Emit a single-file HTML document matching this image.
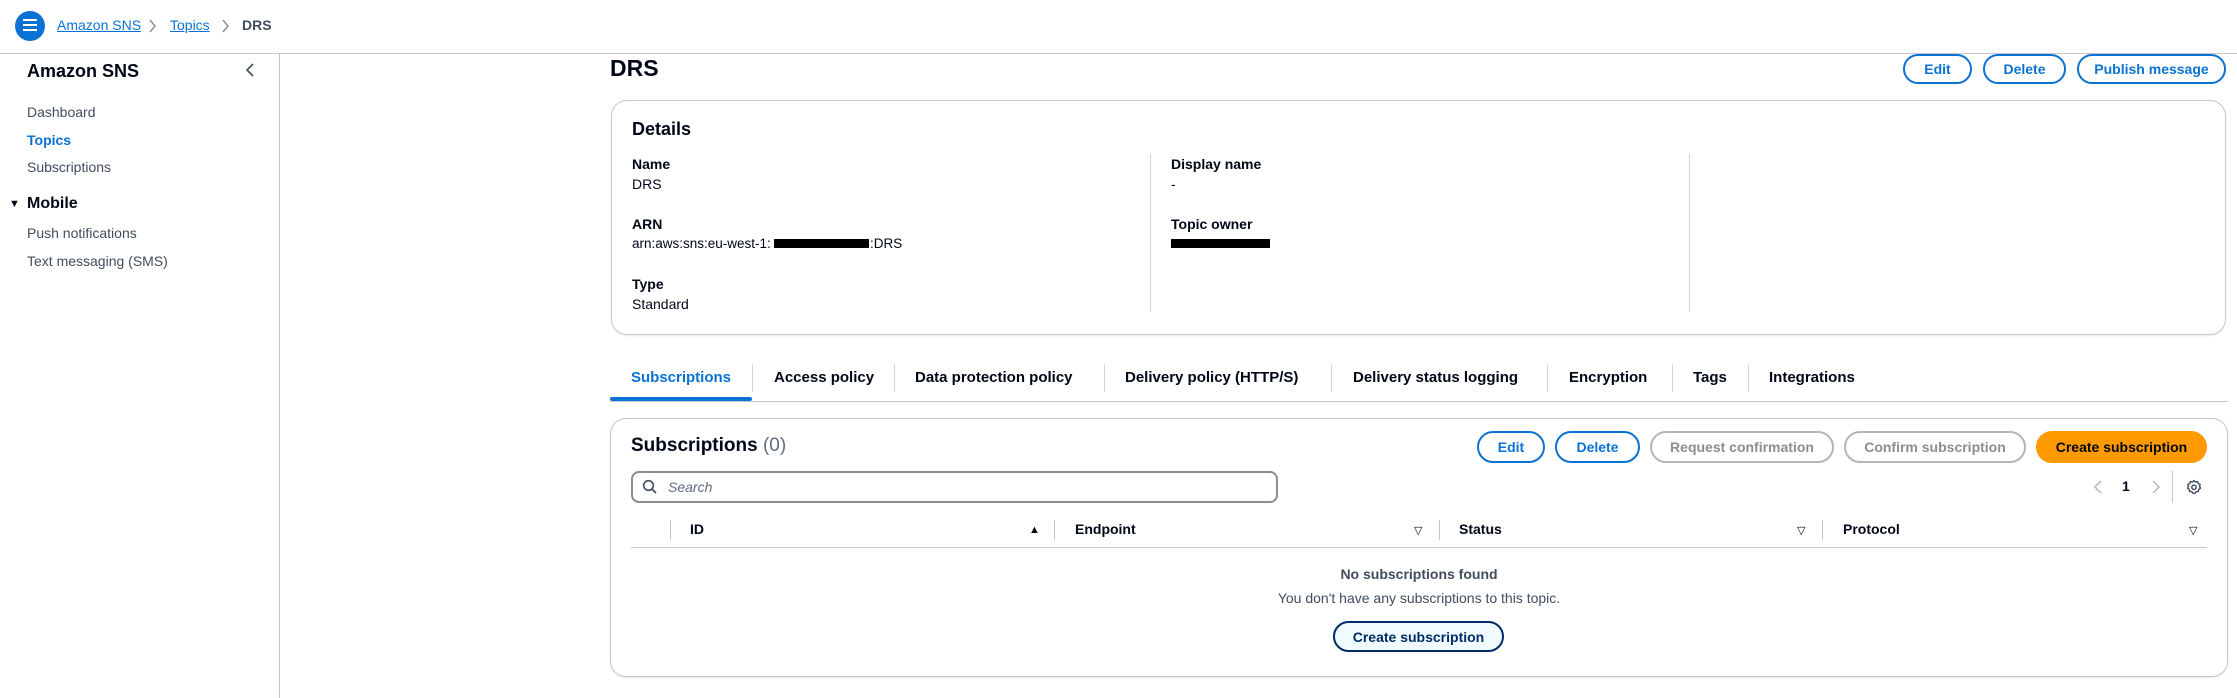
<!DOCTYPE html>
<html><head><meta charset="utf-8"><style>
*{box-sizing:border-box;margin:0;padding:0}
body{width:2237px;height:698px;position:relative;background:#fff;font-family:"Liberation Sans",sans-serif;color:#000716;font-size:14px;overflow:hidden}
.a{position:absolute;white-space:nowrap}
.b{font-weight:bold}
.btn{position:absolute;border:2px solid #0972d3;border-radius:20px;color:#0972d3;font-weight:bold;font-size:14px;display:flex;align-items:center;justify-content:center;background:#fff}
.dis{border-color:#b4b4bb;color:#8c8c94}
.tab{position:absolute;top:369px;font-weight:bold;font-size:15px;color:#000716}
.ts{position:absolute;top:364px;width:1px;height:28px;background:#d1d5db}
.hs{position:absolute;top:520px;width:1px;height:20px;background:#c6c6cd}
.hd{position:absolute;top:521px;font-weight:bold;font-size:14px}
.tri{position:absolute;top:524px;font-size:11px}
</style></head><body>
<!-- header -->
<div class="a" style="left:15px;top:11px;width:30px;height:30px;border-radius:50%;background:#0972d3"></div>
<div class="a" style="left:23px;top:19px;width:14px;height:2px;background:#fff;box-shadow:0 5px 0 #fff,0 10px 0 #fff"></div>
<div class="a" style="left:57px;top:17px;font-size:14px;color:#0972d3;text-decoration:underline">Amazon SNS</div>
<svg class="a" style="left:147px;top:18px" width="10" height="16"><path d="M3 2 L8 8 L3 14" fill="none" stroke="#8c8c94" stroke-width="1.5"/></svg>
<div class="a" style="left:170px;top:17px;font-size:14px;color:#0972d3;text-decoration:underline">Topics</div>
<svg class="a" style="left:220px;top:18px" width="10" height="16"><path d="M3 2 L8 8 L3 14" fill="none" stroke="#8c8c94" stroke-width="1.5"/></svg>
<div class="a b" style="left:242px;top:17px;font-size:14px;color:#414d5c">DRS</div>
<div class="a" style="left:0;top:53px;width:2237px;height:1px;background:#c6c6cd"></div>
<!-- sidebar -->
<div class="a" style="left:279px;top:54px;width:1px;height:644px;background:#c6c6cd"></div>
<div class="a b" style="left:27px;top:61px;font-size:18px">Amazon SNS</div>
<svg class="a" style="left:243px;top:62px" width="14" height="16"><path d="M10 2 L4 8 L10 14" fill="none" stroke="#414d5c" stroke-width="1.6"/></svg>
<div class="a" style="left:27px;top:104px;color:#414d5c">Dashboard</div>
<div class="a b" style="left:27px;top:132px;color:#0972d3">Topics</div>
<div class="a" style="left:27px;top:159px;color:#414d5c">Subscriptions</div>
<div class="a" style="left:9px;top:198px;font-size:11px">&#9660;</div>
<div class="a b" style="left:27px;top:195px;font-size:16px">Mobile</div>
<div class="a" style="left:27px;top:225px;color:#414d5c">Push notifications</div>
<div class="a" style="left:27px;top:253px;color:#414d5c">Text messaging (SMS)</div>
<!-- title -->
<div class="a b" style="left:610px;top:55px;font-size:23px">DRS</div>
<div class="btn" style="left:1903px;top:54px;width:69px;height:30px">Edit</div>
<div class="btn" style="left:1983px;top:54px;width:83px;height:30px">Delete</div>
<div class="btn" style="left:2077px;top:54px;width:149px;height:30px">Publish message</div>
<!-- details -->
<div class="a" style="left:611px;top:100px;width:1615px;height:235px;border:1px solid #c6c6cd;border-radius:16px;box-shadow:0 1px 2px rgba(0,0,0,.08)"></div>
<div class="a b" style="left:632px;top:119px;font-size:18px">Details</div>
<div class="a" style="left:1150px;top:154px;width:1px;height:158px;background:#d1d5db"></div>
<div class="a" style="left:1689px;top:154px;width:1px;height:158px;background:#d1d5db"></div>
<div class="a b" style="left:632px;top:156px">Name</div>
<div class="a" style="left:632px;top:176px">DRS</div>
<div class="a b" style="left:632px;top:216px">ARN</div>
<div class="a" style="left:632px;top:236px;font-size:13.5px">arn:aws:sns:eu-west-1:</div>
<div class="a" style="left:774px;top:239px;width:95px;height:9px;background:#000"></div>
<div class="a" style="left:870px;top:236px;font-size:13.5px">:DRS</div>
<div class="a b" style="left:632px;top:276px">Type</div>
<div class="a" style="left:632px;top:296px">Standard</div>
<div class="a b" style="left:1171px;top:156px">Display name</div>
<div class="a" style="left:1171px;top:176px">-</div>
<div class="a b" style="left:1171px;top:216px">Topic owner</div>
<div class="a" style="left:1171px;top:239px;width:99px;height:9px;background:#000"></div>
<!-- tabs -->
<div class="tab" style="left:631px;color:#0972d3">Subscriptions</div>
<div class="ts" style="left:752px"></div>
<div class="tab" style="left:774px">Access policy</div>
<div class="ts" style="left:894px"></div>
<div class="tab" style="left:915px">Data protection policy</div>
<div class="ts" style="left:1104px"></div>
<div class="tab" style="left:1125px">Delivery policy (HTTP/S)</div>
<div class="ts" style="left:1331px"></div>
<div class="tab" style="left:1353px">Delivery status logging</div>
<div class="ts" style="left:1547px"></div>
<div class="tab" style="left:1569px">Encryption</div>
<div class="ts" style="left:1672px"></div>
<div class="tab" style="left:1693px">Tags</div>
<div class="ts" style="left:1748px"></div>
<div class="tab" style="left:1769px">Integrations</div>
<div class="a" style="left:610px;top:401px;width:1618px;height:1px;background:#c6c6cd"></div>
<div class="a" style="left:610px;top:397px;width:142px;height:4px;background:#0972d3;border-radius:2px"></div>
<!-- subscriptions panel -->
<div class="a" style="left:610px;top:418px;width:1618px;height:259px;border:1px solid #c6c6cd;border-radius:16px;box-shadow:0 1px 2px rgba(0,0,0,.08)"></div>
<div class="a" style="left:631px;top:435px;font-size:19px"><b>Subscriptions</b> <span style="color:#5f6b7a">(0)</span></div>
<div class="btn" style="left:1477px;top:431px;width:68px;height:32px">Edit</div>
<div class="btn" style="left:1555px;top:431px;width:85px;height:32px">Delete</div>
<div class="btn dis" style="left:1650px;top:431px;width:184px;height:32px">Request confirmation</div>
<div class="btn dis" style="left:1844px;top:431px;width:182px;height:32px">Confirm subscription</div>
<div class="btn" style="left:2036px;top:431px;width:171px;height:32px;background:#ff9900;border-color:#ff9900;color:#000716">Create subscription</div>
<div class="a" style="left:631px;top:471px;width:647px;height:32px;border:2px solid #8c8c94;border-radius:8px"></div>
<svg class="a" style="left:642px;top:479px" width="16" height="16"><circle cx="6.5" cy="6.5" r="4.8" fill="none" stroke="#414d5c" stroke-width="1.6"/><path d="M10 10 L14 14" stroke="#414d5c" stroke-width="1.8"/></svg>
<div class="a" style="left:668px;top:479px;font-style:italic;color:#5f6b7a">Search</div>
<svg class="a" style="left:2092px;top:479px" width="12" height="16"><path d="M9 2 L3 8 L9 14" fill="none" stroke="#b4b4bb" stroke-width="1.5"/></svg>
<div class="a b" style="left:2122px;top:478px">1</div>
<svg class="a" style="left:2150px;top:479px" width="12" height="16"><path d="M3 2 L9 8 L3 14" fill="none" stroke="#b4b4bb" stroke-width="1.5"/></svg>
<div class="a" style="left:2172px;top:471px;width:1px;height:32px;background:#c6c6cd"></div>
<svg class="a" style="left:2186px;top:479px" width="16" height="16" viewBox="0 0 16 16"><path d="M8 1.5 L9.5 3 L11.6 2.6 L12.2 4.6 L14.2 5.4 L13.5 7.4 L14.5 9.2 L12.7 10.4 L12.4 12.5 L10.3 12.6 L8.9 14.3 L7.1 14.3 L5.7 12.6 L3.6 12.5 L3.3 10.4 L1.5 9.2 L2.5 7.4 L1.8 5.4 L3.8 4.6 L4.4 2.6 L6.5 3 Z" fill="none" stroke="#414d5c" stroke-width="1.4" stroke-linejoin="round"/><circle cx="8" cy="8.3" r="2.2" fill="none" stroke="#414d5c" stroke-width="1.4"/></svg>
<!-- table header -->
<div class="hs" style="left:670px"></div>
<div class="hd" style="left:690px">ID</div>
<div class="tri" style="left:1029px">&#9650;</div>
<div class="hs" style="left:1054px"></div>
<div class="hd" style="left:1075px">Endpoint</div>
<div class="tri" style="left:1414px">&#9661;</div>
<div class="hs" style="left:1439px"></div>
<div class="hd" style="left:1459px">Status</div>
<div class="tri" style="left:1797px">&#9661;</div>
<div class="hs" style="left:1822px"></div>
<div class="hd" style="left:1843px">Protocol</div>
<div class="tri" style="left:2189px">&#9661;</div>
<div class="a" style="left:631px;top:547px;width:1576px;height:1px;background:#c6c6cd"></div>
<div class="a b" style="left:1419px;top:566px;transform:translateX(-50%);color:#414d5c">No subscriptions found</div>
<div class="a" style="left:1419px;top:590px;transform:translateX(-50%);color:#414d5c">You don't have any subscriptions to this topic.</div>
<div class="btn" style="left:1333px;top:621px;width:171px;height:31px;border-color:#002b66;color:#002b66;background:#f0fbff">Create subscription</div>
</body></html>
